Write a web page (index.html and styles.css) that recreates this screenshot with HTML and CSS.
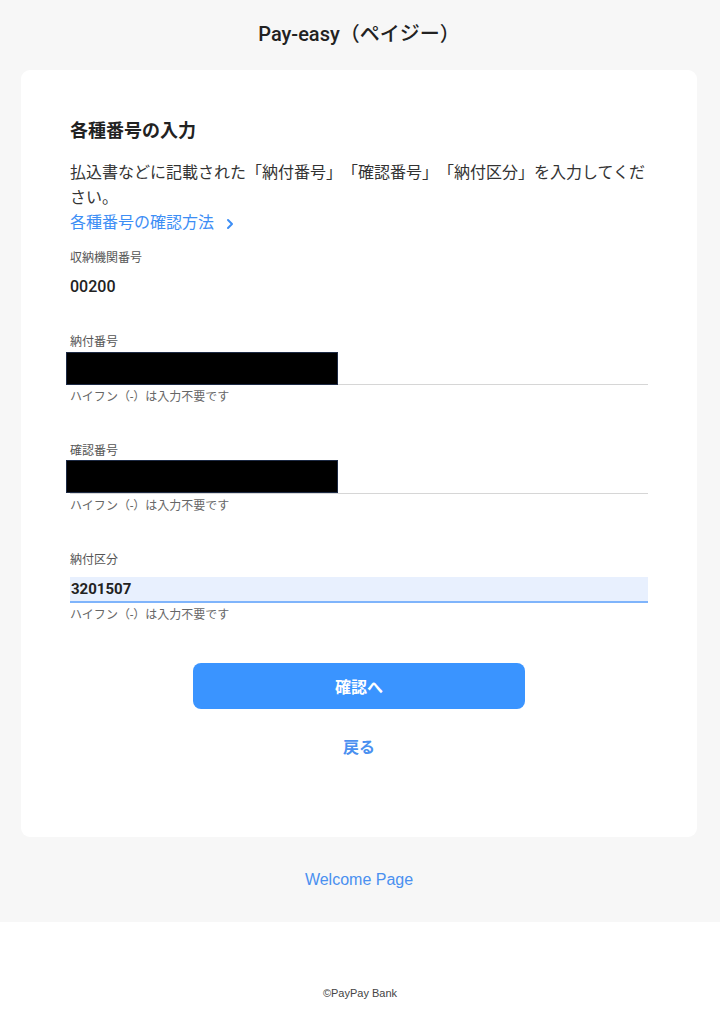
FILE: index.html
```html
<!DOCTYPE html>
<html lang="ja">
<head>
  <meta charset="UTF-8">
  <title>Pay-easy（ペイジー）</title>
  <meta name="viewport" content="width=device-width, initial-scale=1.0">
  <link rel="stylesheet" href="styles.css">
</head>
<body>
  <div class="main">
    <h1 class="page-title">Pay-easy（ペイジー）</h1>

    <div class="card">
      <h2 class="card-title">各種番号の入力</h2>
      <p class="lead">払込書などに記載された「納付番号」「確認番号」「納付区分」を入力してください。</p>
      <a class="help-link" href="#">各種番号の確認方法
        <svg class="chev" width="10" height="12" viewBox="0 0 10 12"><path d="M3 2 L7 6 L3 10" fill="none" stroke="#3d8ef5" stroke-width="2" stroke-linecap="round" stroke-linejoin="round"/></svg>
      </a>

      <div class="static-field">
        <div class="label">収納機関番号</div>
        <div class="static-value">00200</div>
      </div>

      <div class="field">
        <div class="label">納付番号</div>
        <div class="input-wrap">
          <input type="text" class="input">
          <div class="redact"></div>
        </div>
        <div class="hint">ハイフン（-）は入力不要です</div>
      </div>

      <div class="field">
        <div class="label">確認番号</div>
        <div class="input-wrap">
          <input type="text" class="input">
          <div class="redact redact-2"></div>
        </div>
        <div class="hint">ハイフン（-）は入力不要です</div>
      </div>

      <div class="field">
        <div class="label">納付区分</div>
        <div class="input-wrap">
          <input type="text" class="input input-filled" value="3201507">
        </div>
        <div class="hint">ハイフン（-）は入力不要です</div>
      </div>

      <div class="actions">
        <button class="btn-primary">確認へ</button>
        <a class="back-link" href="#">戻る</a>
      </div>
    </div>

    <a class="welcome" href="#">Welcome Page</a>
  </div>

  <footer class="footer">©PayPay Bank</footer>
</body>
</html>
```

FILE: styles.css
```css
body {
  margin: 0;
  background: #fff;
  color: #333;
  font-family: Roboto, "Noto Sans CJK JP", sans-serif;
}
.main {
  background: #f7f7f7;
  padding: 0 23px 32px 21px;
  display: flex;
  flex-direction: column;
  align-items: center;
}
.page-title {
  margin: 0;
  height: 70px;
  line-height: 68px;
  font-size: 20px;
  font-weight: 500;
  color: #222;
}
.card {
  align-self: stretch;
  background: #fff;
  border-radius: 9px;
  padding: 49px 49px 78px 49px;
}
.card-title {
  margin: 0;
  font-size: 18px;
  line-height: 24px;
  font-weight: bold;
  color: #222;
}
.lead {
  margin: 17px 0 0;
  font-size: 16px;
  line-height: 25px;
  color: #333;
  text-spacing-trim: space-all;
}
.help-link {
  display: flex;
  align-items: center;
  gap: 11px;
  font-size: 16px;
  line-height: 25px;
  color: #3d8ef5;
  text-decoration: none;
}
.chev {
  margin-top: 2px;
}
.static-field {
  margin-top: 15px;
}
.label {
  font-size: 12px;
  line-height: 16px;
  color: #555;
}
.static-value {
  margin-top: 11px;
  font-size: 16px;
  line-height: 20px;
  font-weight: 500;
  color: #222;
}
.field {
  margin-top: 37px;
}
.field + .field {
  margin-top: 38px;
}
.input-wrap {
  position: relative;
  margin-top: 9px;
}
.input {
  display: block;
  box-sizing: border-box;
  width: 100%;
  height: 26px;
  margin: 0;
  padding: 0 1px;
  border: none;
  border-bottom: 1px solid #d6d6d6;
  background: transparent;
  font-family: Roboto, "Noto Sans CJK JP", sans-serif;
  font-size: 15px;
  font-weight: bold;
  color: #222;
  outline: none;
}
.input-filled {
  background: #e8f0fe;
  border-bottom: 2px solid #7fb4fb;
}
.redact {
  position: absolute;
  left: -4px;
  bottom: 0;
  width: 270px;
  height: 31px;
  background: #000;
  border: 1px solid #1d2a44;
}
.redact-2 {
  bottom: 1px;
}
.hint {
  margin-top: 4px;
  font-size: 12px;
  line-height: 16px;
  color: #666;
}
.actions {
  margin-top: 40px;
  display: flex;
  flex-direction: column;
  align-items: center;
}
.btn-primary {
  width: 332px;
  height: 46px;
  border: none;
  border-radius: 8px;
  background: #3a94ff;
  color: #fff;
  font-family: Roboto, "Noto Sans CJK JP", sans-serif;
  font-size: 16px;
  font-weight: bold;
}
.back-link {
  margin-top: 28px;
  font-size: 16px;
  line-height: 22px;
  font-weight: bold;
  color: #4a90f0;
  text-decoration: none;
}
.welcome {
  margin-top: 33px;
  font-family: "Liberation Sans", Arial, sans-serif;
  font-size: 16px;
  line-height: 20px;
  color: #4a90f0;
  text-decoration: none;
}
.footer {
  height: 102px;
  box-sizing: border-box;
  padding-top: 64px;
  text-align: center;
  font-family: "Liberation Sans", Arial, sans-serif;
  font-size: 11px;
  line-height: 14px;
  color: #444;
}
```
